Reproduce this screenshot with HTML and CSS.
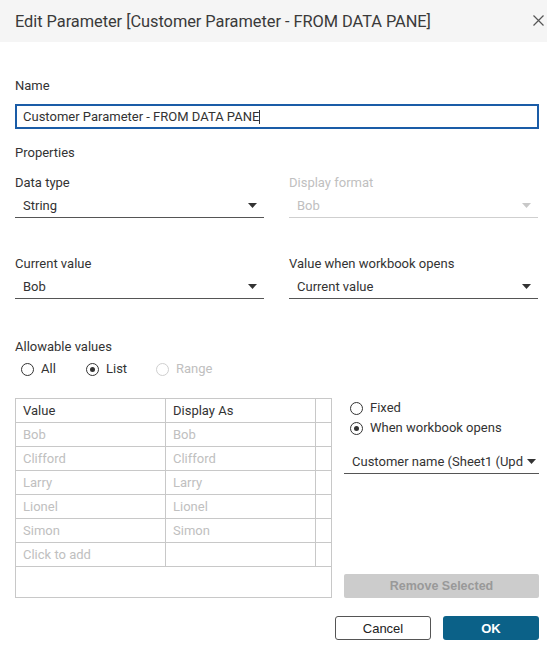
FILE: index.html
```html
<!DOCTYPE html>
<html>
<head>
<meta charset="utf-8">
<link rel="stylesheet" href="styles.css">
</head>
<body>
<div class="dialog">
  <div class="header">
    <span class="title">Edit Parameter [Customer Parameter - FROM DATA PANE]</span>
    <svg class="close" width="11" height="11" viewBox="0 0 11 11"><path d="M0.5 0.5L10.5 10.5M10.5 0.5L0.5 10.5" stroke="#555" stroke-width="1.2" fill="none"/></svg>
  </div>
  <div class="content">
    <div class="label name-label">Name</div>
    <div class="input"><span>Customer Parameter - FROM DATA PANE</span><span class="caret"></span></div>
    <div class="label props">Properties</div>
    <div class="grid">
      <div class="field">
        <div class="label">Data type</div>
        <div class="select"><span>String</span><svg class="arrow" width="9" height="5" viewBox="0 0 9 5"><path d="M0 0H9L4.5 5Z" fill="#333"/></svg></div>
      </div>
      <div class="field disabled">
        <div class="label">Display format</div>
        <div class="select"><span>Bob</span><svg class="arrow" width="9" height="5" viewBox="0 0 9 5"><path d="M0 0H9L4.5 5Z" fill="#c8c8c8"/></svg></div>
      </div>
      <div class="field row2">
        <div class="label">Current value</div>
        <div class="select"><span>Bob</span><svg class="arrow" width="9" height="5" viewBox="0 0 9 5"><path d="M0 0H9L4.5 5Z" fill="#333"/></svg></div>
      </div>
      <div class="field row2">
        <div class="label">Value when workbook opens</div>
        <div class="select"><span>Current value</span><svg class="arrow" width="9" height="5" viewBox="0 0 9 5"><path d="M0 0H9L4.5 5Z" fill="#333"/></svg></div>
      </div>
    </div>
    <div class="label allow">Allowable values</div>
    <div class="radios">
      <div class="radio r-all"><span class="circle"></span><span>All</span></div>
      <div class="radio r-list"><span class="circle on"></span><span>List</span></div>
      <div class="radio r-range disabled"><span class="circle"></span><span>Range</span></div>
    </div>
    <div class="lower">
      <div class="table">
        <div class="trow head"><div class="c1">Value</div><div class="c2">Display As</div><div class="c3"></div></div>
        <div class="trow"><div class="c1">Bob</div><div class="c2">Bob</div><div class="c3"></div></div>
        <div class="trow"><div class="c1">Clifford</div><div class="c2">Clifford</div><div class="c3"></div></div>
        <div class="trow"><div class="c1">Larry</div><div class="c2">Larry</div><div class="c3"></div></div>
        <div class="trow"><div class="c1">Lionel</div><div class="c2">Lionel</div><div class="c3"></div></div>
        <div class="trow"><div class="c1">Simon</div><div class="c2">Simon</div><div class="c3"></div></div>
        <div class="trow"><div class="c1">Click to add</div><div class="c2"></div><div class="c3"></div></div>
      </div>
      <div class="side">
        <div class="radio"><span class="circle"></span><span>Fixed</span></div>
        <div class="radio"><span class="circle on"></span><span>When workbook opens</span></div>
        <div class="select side-select"><span>Customer name (Sheet1 (Upd</span><svg class="arrow" width="9" height="5" viewBox="0 0 9 5"><path d="M0 0H9L4.5 5Z" fill="#333"/></svg></div>
        <div class="remove">Remove Selected</div>
      </div>
    </div>
    <div class="footer">
      <div class="btn cancel">Cancel</div>
      <div class="btn ok">OK</div>
    </div>
  </div>
</div>
</body>
</html>
```
FILE: styles.css
```css
html, body {
  margin: 0;
  padding: 0;
  background: #fff;
}
body {
  font-family: Roboto, "Liberation Sans", sans-serif;
  font-size: 13px;
  color: #333;
  width: 547px;
  height: 651px;
  overflow: hidden;
}
.header {
  height: 42px;
  background: #f5f5f5;
  display: flex;
  align-items: center;
  justify-content: space-between;
  padding: 0 3px 0 15px;
}
.title {
  font-size: 16.4px;
  color: #3a3a3a;
  letter-spacing: -0.05px;
}
.close {
  margin-top: -1px;
}
.content {
  padding: 0 8px 0 15px;
}
.label {
  height: 16px;
  line-height: 16px;
  font-size: 13px;
  color: #333;
}
.name-label {
  margin-top: 36px;
}
.input {
  margin-top: 10px;
  height: 21px;
  border: 2px solid #1a5ca7;
  padding-left: 6px;
  display: flex;
  align-items: center;
  line-height: 21px;
}
.caret {
  display: inline-block;
  width: 1px;
  height: 14px;
  background: #333;
}
.props {
  margin-top: 16px;
}
.grid {
  display: grid;
  grid-template-columns: 249px 249px;
  column-gap: 25px;
  margin-top: 14px;
}
.row2 {
  margin-top: 38px;
}
.select {
  margin-top: 3px;
  height: 23px;
  border-bottom: 1px solid #555;
  display: flex;
  align-items: center;
  justify-content: space-between;
  padding: 0 7px 0 8px;
}
.field.disabled .label,
.field.disabled .select {
  color: #c0c0c0;
}
.field.disabled .select {
  border-bottom-color: #cfcfcf;
}
.arrow {
  display: block;
}
.allow {
  margin-top: 40px;
}
.radios {
  display: flex;
  margin-top: 6px;
  height: 16px;
  padding-left: 6px;
}
.radio {
  display: flex;
  align-items: center;
  height: 16px;
  line-height: 16px;
}
.circle {
  box-sizing: border-box;
  width: 13px;
  height: 13px;
  border: 1px solid #333;
  border-radius: 50%;
  margin-right: 7px;
  position: relative;
  flex: none;
}
.circle.on::after {
  content: "";
  position: absolute;
  left: 3px;
  top: 3px;
  width: 5px;
  height: 5px;
  border-radius: 50%;
  background: #333;
}
.r-all { width: 65px; }
.r-list { width: 70px; }
.radio.disabled { color: #c0c0c0; }
.radio.disabled .circle { border-color: #cfcfcf; }
.lower {
  display: flex;
  margin-top: 21px;
  height: 200px;
}
.table {
  box-sizing: border-box;
  width: 317px;
  height: 200px;
  border: 1px solid #c8c8c8;
  flex: none;
}
.trow {
  display: flex;
  height: 23px;
  border-bottom: 1px solid #c8c8c8;
  line-height: 23px;
  color: #c0c0c0;
}
.trow.head {
  color: #333;
}
.c1, .c2 {
  box-sizing: border-box;
  width: 150px;
  border-right: 1px solid #c8c8c8;
  padding-left: 7px;
}
.c3 {
  flex: 1;
}
.side {
  margin-left: 12px;
  width: 195px;
  display: flex;
  flex-direction: column;
}
.side .radio {
  padding-left: 6px;
  height: 20px;
  line-height: 20px;
}
.side-select {
  margin-top: 11px;
  padding-left: 8px;
  padding-right: 3px;
  height: 24px;
}
.remove {
  margin-top: auto;
  height: 24px;
  background: #cccccc;
  border-radius: 2px;
  color: #999;
  font-family: "Liberation Sans", Arial, sans-serif;
  font-weight: bold;
  font-size: 12.5px;
  display: flex;
  align-items: center;
  justify-content: center;
}
.footer {
  display: flex;
  justify-content: flex-end;
  margin-top: 18px;
  gap: 12px;
}
.btn {
  box-sizing: border-box;
  width: 96px;
  height: 24px;
  border-radius: 3px;
  display: flex;
  align-items: center;
  justify-content: center;
  font-family: "Liberation Sans", Arial, sans-serif;
  font-size: 13px;
}
.cancel {
  border: 1px solid #555;
  color: #222;
}
.ok {
  background: #0b6188;
  color: #fff;
  font-weight: bold;
}
```
